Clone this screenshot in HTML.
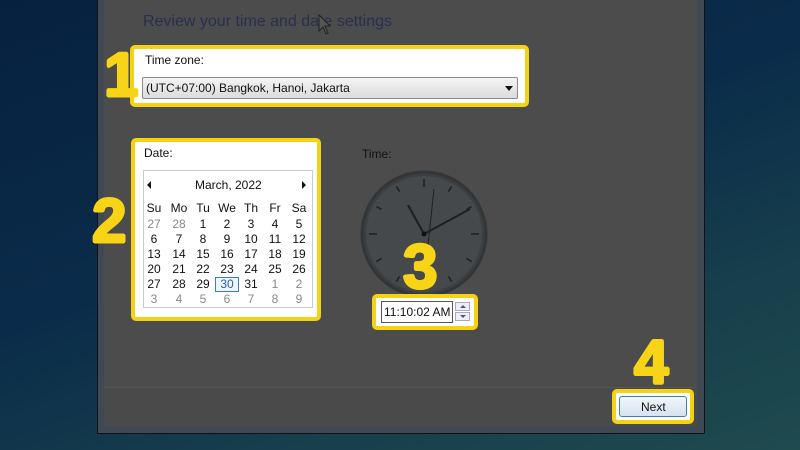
<!DOCTYPE html>
<html><head><meta charset="utf-8"><style>
*{margin:0;padding:0;box-sizing:border-box}
body{width:800px;height:450px;overflow:hidden;position:relative;font-family:"Liberation Sans",sans-serif;background:linear-gradient(160deg,#06213f 0%,#0a2c4a 45%,#173f4c 75%,#1f4a4e 100%)}
.abs{position:absolute}
.frame{left:97px;top:-2px;width:608px;height:436px;background:#3f4853;border:1px solid #101418}
.inner{left:104px;top:0;width:593px;height:426px;background:#4c4c4c}
.foot{left:104px;top:387px;width:593px;height:39px;background:#4a4a4a;border-top:1px solid #555}
.num{position:absolute;color:#f7d516;font-weight:bold;font-size:62px;line-height:1;font-family:"Liberation Sans",sans-serif;z-index:5;text-shadow:1.5px 0 #f7d516,-1.5px 0 #f7d516,0 1.5px #f7d516,0 -1.5px #f7d516,1px 1px #f7d516,-1px -1px #f7d516,1px -1px #f7d516,-1px 1px #f7d516}
.ybox{position:absolute;background:#fff;border:4px solid #f5d312;border-radius:5px}
.t{position:absolute;font-size:12px;color:#111;white-space:nowrap}
.cal{position:absolute;left:143px;top:170px;width:170px;height:138px;border:1px solid #c8ccd2;background:#fff}
.c{position:absolute;width:24px;text-align:center;font-size:12px;color:#111}
.g{color:#888}
</style></head><body>
<div class="abs frame"></div>
<div class="abs inner"></div>
<div class="abs foot"></div>
<div class="t" style="left:143px;top:13px;font-size:16px;color:#283050">Review your time and date settings</div>
<svg class="abs" style="left:318px;top:14px" width="14" height="22" viewBox="0 0 14 22"><path d="M1 1 L1 17 L5 13 L8 20 L10 19 L7 12 L12 12 Z" fill="#555" stroke="#222" stroke-width="1"/></svg>

<div class="ybox" style="left:130px;top:45px;width:399px;height:62px"></div>
<div class="t" style="left:145px;top:53px">Time zone:</div>
<div class="abs" style="left:142px;top:77px;width:376px;height:22px;border:1px solid #8a8a8a;border-radius:2px;background:linear-gradient(#f4f4f4,#dcdcdc)"></div>
<div class="t" style="left:146px;top:81px">(UTC+07:00) Bangkok, Hanoi, Jakarta</div>
<div class="abs" style="left:505px;top:86px;width:0;height:0;border-left:4px solid transparent;border-right:4px solid transparent;border-top:5px solid #111"></div>

<div class="ybox" style="left:131px;top:138px;width:190px;height:183px"></div>
<div class="t" style="left:144px;top:146px">Date:</div>
<div class="cal"></div>
<div class="abs" style="left:147px;top:181px;border-top:4px solid transparent;border-bottom:4px solid transparent;border-right:4px solid #111"></div>
<div class="abs" style="left:302px;top:181px;border-top:4px solid transparent;border-bottom:4px solid transparent;border-left:4px solid #111"></div>
<div class="t" style="left:195px;top:178px">March, 2022</div>
<div id="grid"></div>

<div class="t" style="left:362px;top:147px;color:#111">Time:</div>
<svg class="abs" style="left:358px;top:168px" width="132" height="132" viewBox="-66 -66 132 132">
<circle r="62" fill="#3c3f41" stroke="#333537" stroke-width="3"/>
<circle r="58" fill="#46494b"/>
<g stroke="#222" stroke-width="1.6">
<line x1="0" y1="-55" x2="0" y2="-47" transform="rotate(0)"/><line x1="0" y1="-55" x2="0" y2="-49" transform="rotate(30)"/><line x1="0" y1="-55" x2="0" y2="-49" transform="rotate(60)"/><line x1="0" y1="-55" x2="0" y2="-47" transform="rotate(90)"/><line x1="0" y1="-55" x2="0" y2="-49" transform="rotate(120)"/><line x1="0" y1="-55" x2="0" y2="-49" transform="rotate(150)"/><line x1="0" y1="-55" x2="0" y2="-47" transform="rotate(180)"/><line x1="0" y1="-55" x2="0" y2="-49" transform="rotate(210)"/><line x1="0" y1="-55" x2="0" y2="-49" transform="rotate(240)"/><line x1="0" y1="-55" x2="0" y2="-47" transform="rotate(270)"/><line x1="0" y1="-55" x2="0" y2="-49" transform="rotate(300)"/><line x1="0" y1="-55" x2="0" y2="-49" transform="rotate(330)"/>
</g>
<line x1="0" y1="0" x2="-16" y2="-29" stroke="#1e2022" stroke-width="2.2"/>
<line x1="0" y1="0" x2="46" y2="-25" stroke="#1e2022" stroke-width="2"/>
<line x1="3" y1="20" x2="10" y2="-45" stroke="#1e2022" stroke-width="1"/>
<circle r="2.5" fill="#111"/>
</svg>

<div class="ybox" style="left:372px;top:294px;width:106px;height:36px"></div>
<div class="abs" style="left:381px;top:301px;width:72px;height:22px;border:1px solid #555;background:#fff"></div>
<div class="t" style="left:384px;top:305px">11:10:02 AM</div>
<div class="abs" style="left:455px;top:302px;width:15px;height:9px;border:1px solid #aab;background:#eef"></div>
<div class="abs" style="left:455px;top:312px;width:15px;height:9px;border:1px solid #aab;background:#eef"></div>
<div class="abs" style="left:460px;top:305px;border-left:3px solid transparent;border-right:3px solid transparent;border-bottom:3px solid #557"></div>
<div class="abs" style="left:460px;top:315px;border-left:3px solid transparent;border-right:3px solid transparent;border-top:3px solid #557"></div>

<div class="ybox" style="left:612px;top:389px;width:82px;height:35px"></div>
<div class="abs" style="left:619px;top:396px;width:68px;height:21px;border:1px solid #3c7fb1;border-radius:3px;background:linear-gradient(#f2f6fb,#d6e3f0)"></div>
<div class="t" style="left:641px;top:400px">Next</div>

<div class="num" style="left:104px;top:45px">1</div>
<div class="num" style="left:92px;top:191px">2</div>
<div class="num" style="left:403px;top:237px">3</div>
<div class="num" style="left:634px;top:332px">4</div>

<script>
var cols=[154,179,203,227,251,275,299];
var rows=[
["Su","Mo","Tu","We","Th","Fr","Sa"],
["27g","28g","1","2","3","4","5"],
["6","7","8","9","10","11","12"],
["13","14","15","16","17","18","19"],
["20","21","22","23","24","25","26"],
["27","28","29","30s","31","1g","2g"],
["3g","4g","5g","6g","7g","8g","9g"]];
var ys=[201,217,232,247,262,277,292];
var h="";
rows.forEach(function(r,i){r.forEach(function(v,j){
var cls="c",txt=v,st="";
if(v.slice(-1)=="g"){cls+=" g";txt=v.slice(0,-1);}
if(v.slice(-1)=="s"){txt=v.slice(0,-1);st="border:1px solid #3a7fbd;color:#2a5f9a;background:#eef5fc;height:15px;line-height:13px;";}
h+='<div class="'+cls+'" style="left:'+(cols[j]-12)+'px;top:'+ys[i]+'px;'+st+'">'+txt+'</div>';});});
document.getElementById("grid").innerHTML=h;
</script>
</body></html>
